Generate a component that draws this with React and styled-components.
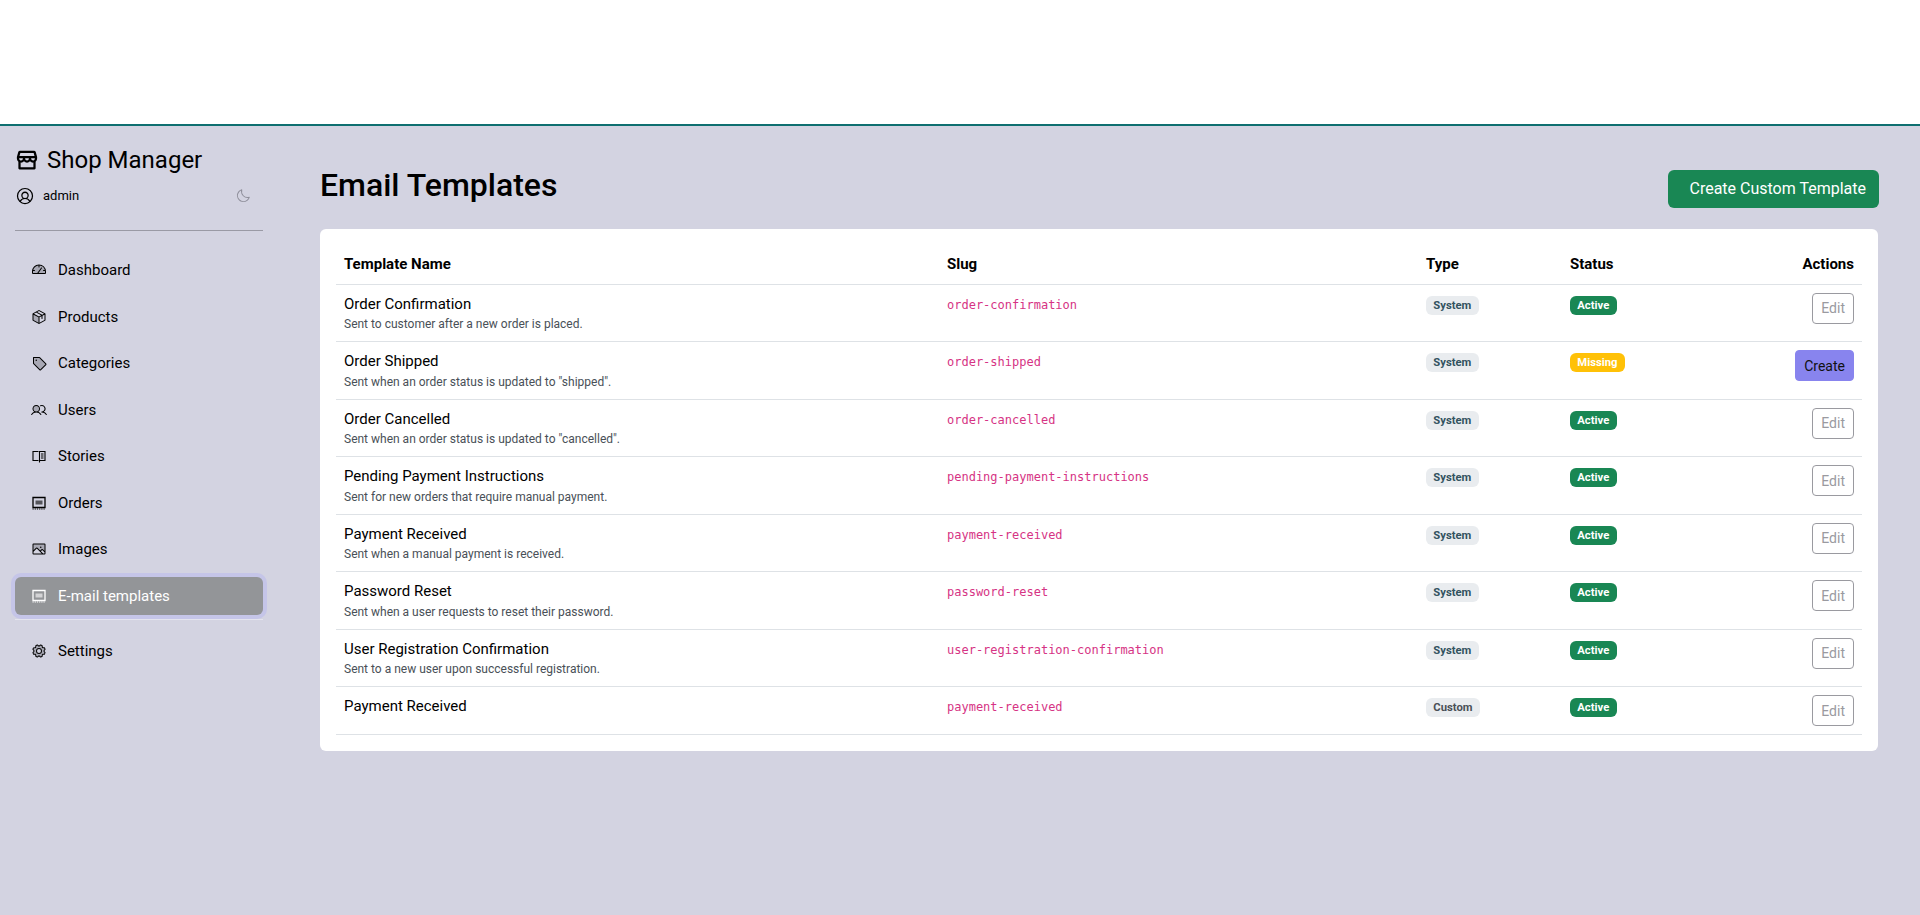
import React from 'react';
import styled, { createGlobalStyle } from 'styled-components';
import {
  PiStorefrontBold, PiUserCircle, PiMoon, PiGaugeDuotone, PiPackageDuotone, PiTagDuotone,
  PiUsersDuotone, PiImageDuotone, PiGearDuotone,
} from 'react-icons/pi';

const GlobalStyle = createGlobalStyle`
  html, body { margin: 0; padding: 0; background: #fff; }
  body {
    font-family: Roboto, "Liberation Sans", sans-serif;
    font-size: 15px;
    line-height: 1.5;
    color: #000;
  }
`;

const TopBlank = styled.div`
  height: 124px;
  background: #fff;
`;

const Shell = styled.div`
  display: flex;
  min-height: 791px;
  box-sizing: border-box;
  border-top: 2px solid #0f6f70;
  background: #d3d3e1;
`;

const Sidebar = styled.aside`
  width: 248px;
  flex: none;
  margin-left: 15px;
  padding-top: 20px;
`;

const Brand = styled.div`
  display: flex;
  align-items: center;
  gap: 8px;
  font-size: 24px;
  line-height: 28px;
`;

const UserRow = styled.div`
  display: flex;
  align-items: center;
  gap: 8px;
  margin-top: 12px;
  font-size: 13px;
  line-height: 20px;
`;

const Moon = styled.span`
  display: flex;
  margin-left: auto;
  margin-right: 12px;
  color: #8f8f9b;
`;

const Rule = styled.hr`
  margin: 24px 0 20px;
  border: 0;
  border-top: 1px solid #9a9aa5;
`;

const NavLink = styled.a`
  display: flex;
  align-items: center;
  gap: 11px;
  height: 38.5px;
  margin-bottom: 8px;
  padding-left: 16px;
  border-radius: 6px;
  font-size: 15px;
  color: ${(p) => (p.$active ? '#fff' : '#000')};
  background: ${(p) => (p.$active ? '#939598' : 'transparent')};
  box-shadow: ${(p) => (p.$active ? '0 0 0 4px #c5c5e8' : 'none')};
`;

const NavRule = styled.hr`
  margin: -4px 0 12px;
  border: 0;
  border-top: 1px solid #e4e4ee;
`;

const Main = styled.main`
  flex: 1;
  min-width: 0;
  margin: 0 42px 0 57px;
  padding-top: 44px;
`;

const PageHead = styled.div`
  display: flex;
  align-items: flex-start;
  justify-content: space-between;
  height: 38px;
  margin-bottom: 21px;
`;

const Title = styled.h1`
  margin: 0;
  font-size: 32px;
  line-height: 31px;
  font-weight: 500;
`;

const CreateCustom = styled.button`
  height: 38px;
  margin-right: -1px;
  padding: 0 13px 2px 21px;
  border: 0;
  border-radius: 6px;
  background: #198754;
  color: #fff;
  font: 400 16px Roboto, sans-serif;
`;

const Card = styled.section`
  padding: 16px;
  background: #fff;
  border-radius: 6px;
`;

const Table = styled.table`
  width: 100%;
  table-layout: fixed;
  border-collapse: collapse;
`;

const Th = styled.th`
  padding: 8px;
  border-bottom: 1px solid #dee2e6;
  font-weight: 700;
  text-align: ${(p) => (p.$right ? 'right' : 'left')};
`;

const Td = styled.td`
  padding: 8px;
  border-bottom: 1px solid #dee2e6;
  vertical-align: top;
  text-align: ${(p) => (p.$right ? 'right' : 'left')};
`;

const Hint = styled.small`
  display: block;
  font-size: 12px;
  color: #495057;
`;

const Slug = styled.code`
  font-family: "DejaVu Sans Mono", monospace;
  font-size: 12px;
  color: #d63384;
`;

const Badge = styled.span`
  display: inline-block;
  padding: 0.35em 0.65em;
  border-radius: 6px;
  font-size: 11.25px;
  line-height: 1;
  font-weight: 700;
  color: ${(p) => ({ system: '#33535f', custom: '#495057' }[p.$tone] || '#fff')};
  background: ${(p) => ({ ok: '#198754', warn: '#ffc107' }[p.$tone] || '#e9ecef')};
`;

const ActionButton = styled.button`
  height: 31px;
  padding: 0 8px;
  border-radius: 4px;
  font: 400 14px Roboto, sans-serif;
  border: 1px solid ${(p) => (p.$create ? '#8884ee' : '#9a9aa0')};
  background: ${(p) => (p.$create ? '#8884ee' : '#fff')};
  color: ${(p) => (p.$create ? '#111' : '#9a9aa0')};
`;

const BookIcon = ({ size }) => (
  <svg width={size} height={size} viewBox="0 0 16 16" fill="none" stroke="currentColor" strokeWidth="1.1">
    <path d="M7.5 3.5H2v9h5.5" />
    <path d="M8.5 14.5v-11H14v9H8.5" />
    <path d="M10 6h2.5M10 8h2.5M10 10h2.5" />
  </svg>
);

const TemplateIcon = ({ size }) => (
  <svg width={size} height={size} viewBox="0 0 16 16" fill="none" stroke="currentColor">
    <path d="M2 2.5h12v10H2z" strokeWidth="1.3" />
    <path d="M4.5 5.5h7v4h-7z" fill="currentColor" opacity="0.6" strokeWidth="0" />
    <path d="M1.5 14h13" strokeWidth="1.1" strokeDasharray="1.2 1" />
  </svg>
);

const navItems = [
  ['Dashboard', PiGaugeDuotone],
  ['Products', PiPackageDuotone],
  ['Categories', PiTagDuotone],
  ['Users', PiUsersDuotone],
  ['Stories', BookIcon],
  ['Orders', TemplateIcon],
  ['Images', PiImageDuotone],
  ['E-mail templates', TemplateIcon, true],
];

const templates = [
  ['Order Confirmation', 'Sent to customer after a new order is placed.', 'order-confirmation', 'System', true],
  ['Order Shipped', 'Sent when an order status is updated to "shipped".', 'order-shipped', 'System', false],
  ['Order Cancelled', 'Sent when an order status is updated to "cancelled".', 'order-cancelled', 'System', true],
  ['Pending Payment Instructions', 'Sent for new orders that require manual payment.', 'pending-payment-instructions', 'System', true],
  ['Payment Received', 'Sent when a manual payment is received.', 'payment-received', 'System', true],
  ['Password Reset', 'Sent when a user requests to reset their password.', 'password-reset', 'System', true],
  ['User Registration Confirmation', 'Sent to a new user upon successful registration.', 'user-registration-confirmation', 'System', true],
  ['Payment Received', '', 'payment-received', 'Custom', true],
];

const App = () => (
  <>
    <GlobalStyle />
    <TopBlank />
    <Shell>
      <Sidebar>
        <Brand><PiStorefrontBold size={24} /> Shop Manager</Brand>
        <UserRow>
          <PiUserCircle size={20} /> admin
          <Moon><PiMoon size={16} /></Moon>
        </UserRow>
        <Rule />
        {navItems.map(([label, Icon, active]) => (
          <NavLink key={label} $active={active}>
            <Icon size={16} /> {label}
          </NavLink>
        ))}
        <NavRule />
        <NavLink><PiGearDuotone size={16} /> Settings</NavLink>
      </Sidebar>
      <Main>
        <PageHead>
          <Title>Email Templates</Title>
          <CreateCustom>Create Custom Template</CreateCustom>
        </PageHead>
        <Card>
          <Table>
            <colgroup>
              <col width="603" />
              <col width="479" />
              <col width="144" />
              <col />
              <col width="160" />
            </colgroup>
            <thead>
              <tr>
                <Th>Template Name</Th>
                <Th>Slug</Th>
                <Th>Type</Th>
                <Th>Status</Th>
                <Th $right>Actions</Th>
              </tr>
            </thead>
            <tbody>
              {templates.map(([name, hint, slug, type, active]) => (
                <tr key={slug + type}>
                  <Td>
                    {name}
                    {hint && <Hint>{hint}</Hint>}
                  </Td>
                  <Td><Slug>{slug}</Slug></Td>
                  <Td><Badge $tone={type.toLowerCase()}>{type}</Badge></Td>
                  <Td><Badge $tone={active ? 'ok' : 'warn'}>{active ? 'Active' : 'Missing'}</Badge></Td>
                  <Td $right>
                    {active
                      ? <ActionButton>Edit</ActionButton>
                      : <ActionButton $create>Create</ActionButton>}
                  </Td>
                </tr>
              ))}
            </tbody>
          </Table>
        </Card>
      </Main>
    </Shell>
  </>
);

export default App;
